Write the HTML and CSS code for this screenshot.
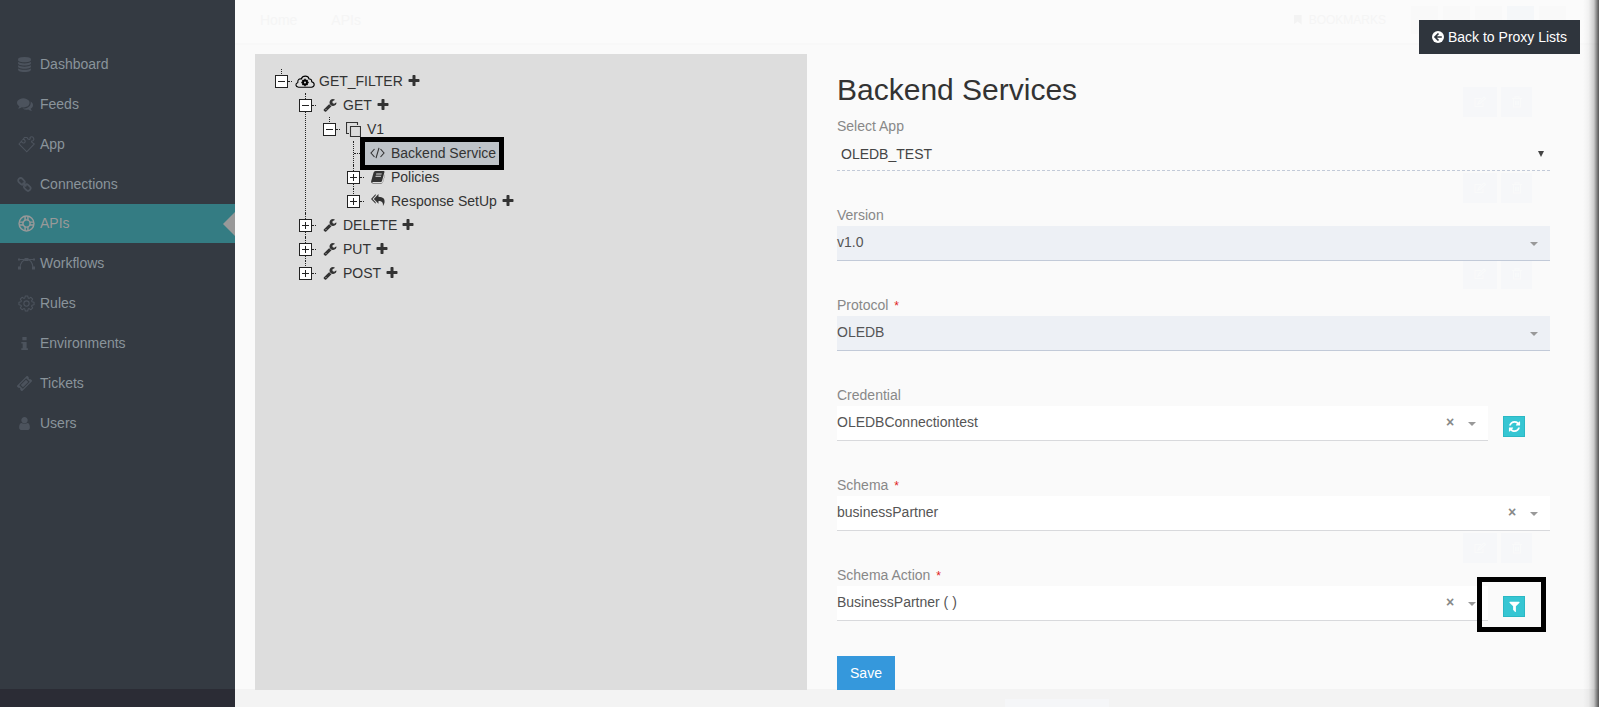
FILE: index.html
```html
<!DOCTYPE html>
<html lang="en">
<head>
<meta charset="utf-8">
<title>Backend Services</title>
<link rel="stylesheet" href="styles.css">
</head>
<body>
<svg class="defs" aria-hidden="true">
<symbol id="database" viewBox="0 0 1792 1792"><path d="M896 768q237 0 443-43t325-127v170q0 69-103 128t-280 93.500-385 34.500-385-34.500-280-93.500-103-128v-170q119 84 325 127t443 43zm0 768q237 0 443-43t325-127v170q0 69-103 128t-280 93.500-385 34.500-385-34.500-280-93.500-103-128v-170q119 84 325 127t443 43zm0-384q237 0 443-43t325-127v170q0 69-103 128t-280 93.500-385 34.500-385-34.500-280-93.500-103-128v-170q119 84 325 127t443 43zm0-1152q208 0 385 34.500t280 93.500 103 128v128q0 69-103 128t-280 93.500-385 34.500-385-34.500-280-93.500-103-128v-128q0-69 103-128t280-93.500 385-34.500z"/></symbol>
<symbol id="comments" viewBox="0 0 1792 1792"><path d="M1408 768q0 139-94 257t-256.500 186.500-353.500 68.500q-86 0-176-16-124 88-278 128-36 9-86 16h-3q-11 0-20.500-8t-11.500-21q-1-3-1-6.500t.5-6.500 2-6l2.500-5 3.500-5.500 4-5 4.500-5 4-4.500q5-6 23-25t26-29.500 22.500-29 25-38.500 20.500-44q-124-72-195-177t-71-224q0-139 94-257t256.500-186.500 353.500-68.500 353.500 68.500 256.500 186.500 94 257zm384 256q0 120-71 224.500t-195 176.500q10 24 20.500 44t25 38.500 22.500 29 26 29.500 23 25q1 1 4 4.500t4.500 5 4 5 3.500 5.500l2.500 5 2 6 .5 6.500-1 6.500q-3 14-13 22t-22 7q-50-7-86-16-154-40-278-128-90 16-176 16-271 0-472-132 58 4 88 4 161 0 309-45t264-129q125-92 192-212t67-254q0-77-23-152 129 71 204 178t75 230z"/></symbol>
<symbol id="puzzle" viewBox="0 0 17 17"><path class="line" d="M1 8 L3.500 5.200 C4 8 8 7.500 7 4.500 C6.500 3.500 5.500 3.300 5 3.500 L6.500 1.500 L9 1.500 L10 3 C12 4 12.500 3 12 1.500 C13 .3 15 .5 15.500 2 C16.500 4 15 5 13.800 5 C13 6 14 6.500 16.300 8 L8.800 15.800 Z"/></symbol>
<symbol id="link" viewBox="0 0 16 16"><g class="line thick"><rect x="1" y="2" width="7.500" height="5.200" rx="2.400" transform="rotate(45 4.700 4.600)"/><rect x="7.200" y="8.700" width="7.500" height="5.200" rx="2.400" transform="rotate(45 11 11.300)"/><path d="M6 6l4 4"/></g></symbol>
<symbol id="ring" viewBox="0 0 18 18"><g class="line ringline"><circle cx="9" cy="9" r="7.900"/><circle cx="9" cy="9" r="3.800"/><path d="M7.500 1.500v4M10.500 1.500v4M7.500 12.500v4M10.500 12.500v4M1.500 7.500h4M1.500 10.500h4M12.500 7.500h4M12.500 10.500h4"/></g></symbol>
<symbol id="vector" viewBox="0 0 17 14"><path class="line" d="M1 3h15M2 11C2.500 6 5 3.500 8.500 3S14.500 6 15 11"/><path d="M6.500 1.500h4v3h-4zM0 10h3v3H0zM14 10h3v3h-3zM0 2h2v2H0zM15 2h2v2h-2z"/></symbol>
<symbol id="gear" viewBox="0 0 18 18"><path class="line" stroke-linejoin="round" d="M7.700 1h2.600l.5 2.200 1 .4 1.900-1.200 1.900 1.900-1.200 1.900.4 1 2.200.5v2.600l-2.200.5-.4 1 1.200 1.900-1.900 1.900-1.900-1.200-1 .4-.5 2.200H7.700l-.5-2.200-1-.4-1.900 1.200-1.900-1.900 1.200-1.900-.4-1L1 10.300V7.700l2.200-.5.4-1-1.200-1.900 1.900-1.900 1.900 1.200 1-.4z"/><circle class="line" cx="9" cy="9" r="2.800"/></symbol>
<symbol id="info" viewBox="0 0 14 14"><path d="M5 1h4v3H5zM4 5.500h5v6h1.200V13H4v-1.500h1.300V7H4z"/></symbol>
<symbol id="ticket" viewBox="0 0 16 16"><g transform="rotate(-45 8 8)"><path fill-rule="evenodd" d="M0 4h16v2.500a1.600 1.600 0 0 0 0 3V12H0V9.500a1.600 1.600 0 0 0 0-3zM2.800 5.300v5.400h10.400V5.300z"/><path d="M4 6.300h8v3.400H4z"/></g></symbol>
<symbol id="user" viewBox="0 0 1792 1792"><path d="M1536 1399q0 109-62.500 187t-150.500 78h-854q-88 0-150.500-78t-62.500-187q0-85 8.500-160.500t31.500-152 58.500-131 94-89 134.500-34.500q131 128 313 128t313-128q76 0 134.500 34.500t94 89 58.500 131 31.500 152 8.500 160.500zm-256-887q0 159-112.500 271.500t-271.500 112.500-271.500-112.500-112.500-271.500 112.500-271.500 271.500-112.500 271.500 112.500 112.500 271.500z"/></symbol>
<symbol id="cloud" viewBox="0 0 20 13"><path class="line" d="M3.600 12.200C.3 12 0 8.600 2.800 7.400 2.500 4.500 4.500 3.400 6.300 4 7.500.2 13.300.2 14 4c2-.3 2.800 1 2.700 2.800 3.500 1 3.200 5.200-.2 5.400z"/><circle cx="10" cy="7.500" r="2" fill="none" stroke="currentColor" stroke-width="2"/><path d="M9.300 3.800h1.400v1.500H9.300zM9.300 9.700h1.400v1.500H9.300zM6.300 6.800h1.500v1.400H6.300zM12.200 6.800h1.500v1.400h-1.500zM7 5.500l1-1 1 1-1 1zM12 4.500l1 1-1 1-1-1zM7 9.500l1-1 1 1-1 1zM11 9.500l1-1 1 1-1 1z"/></symbol>
<symbol id="wrench" viewBox="0 0 1792 1792"><path d="M448 1472q0-26-19-45t-45-19-45 19-19 45 19 45 45 19 45-19 19-45zm644-420l-682 682q-37 37-90 37-52 0-91-37l-106-108q-38-36-38-90 0-53 38-91l681-681q39 98 114.500 173.500t173.500 114.500zm634-435q0 39-23 106-47 134-164.500 217.500t-258.500 83.500q-185 0-316.500-131.500t-131.500-316.500 131.500-316.500 316.500-131.500q58 0 121.500 16.500t107.500 46.500q16 11 16 28t-16 28l-293 169v224l193 107q5-3 79-48.500t135.500-81 70.500-35.500q15 0 23.500 10t8.500 25z"/></symbol>
<symbol id="plus" viewBox="0 0 1792 1792"><path d="M1600 736v192q0 40-28 68t-68 28h-416v416q0 40-28 68t-68 28h-192q-40 0-68-28t-28-68v-416h-416q-40 0-68-28t-28-68v-192q0-40 28-68t68-28h416v-416q0-40 28-68t68-28h192q40 0 68 28t28 68v416h416q40 0 68 28t28 68z"/></symbol>
<symbol id="copy" viewBox="0 0 15 15"><path class="line" d="M4.500 4.500h10v10h-10zM3 11.500H.500V.500h11V3"/></symbol>
<symbol id="code" viewBox="0 0 15 12"><path class="line" d="M4.500 2L1 6l3.500 4M10.500 2L14 6l-3.500 4M9 .8L6 11.200"/></symbol>
<symbol id="book" viewBox="0 0 14 13"><path fill-rule="evenodd" d="M4.500.5h8.200q1 .1.700 1.200L11 10.500q-.3 1-1.300 1H2q-.9 0-.8.500.1.500 1 .5H10.500q1 0 1.300-1L14 3.800v.8l-2 7q-.4 1.400-1.700 1.400H2Q-.3 13 .2 10.500L2.600 2Q3 .6 4.500.5zM5.300 3l-.3 1h5.500l.3-1zM4.700 5.200l-.3 1h5.500l.3-1z"/></symbol>
<symbol id="reply" viewBox="0 0 15 13"><path d="M8 0v3c5 .2 7 2.200 6.500 6-.2 1.700-1 3-1.700 4 .3-3.800-.8-5.200-4.800-5.400V10.500L3 5.300zM5 0v1.700L1.600 5.300 5 8.900v1.600L0 5.300z"/></symbol>
<symbol id="refresh" viewBox="0 0 1792 1792"><path d="M1639 1056q0 5-1 7-64 268-268 434.500t-478 166.500q-146 0-282.500-55t-243.500-157l-129 129q-19 19-45 19t-45-19-19-45v-448q0-26 19-45t45-19h448q26 0 45 19t19 45-19 45l-137 137q71 66 161 102t187 36q134 0 250-65t186-179q11-17 53-117 8-23 30-23h192q13 0 22.500 9.500t9.500 22.500zm25-800v448q0 26-19 45t-45 19h-448q-26 0-45-19t-19-45 19-45l138-138q-148-137-349-137-134 0-250 65t-186 179q-11 17-53 117-8 23-30 23h-199q-13 0-22.500-9.500t-9.500-22.500v-7q65-268 270-434.500t480-166.500q146 0 284 55.500t245 156.500l130-129q19-19 45-19t45 19 19 45z"/></symbol>
<symbol id="filter" viewBox="0 0 1792 1792"><path d="M1595 295q17 41-14 70l-493 493v742q0 42-39 59-13 5-25 5-27 0-45-19l-256-256q-19-19-19-45v-486l-493-493q-31-29-14-70 17-39 59-39h1280q42 0 59 39z"/></symbol>
<symbol id="back" viewBox="0 0 12 12"><circle cx="6" cy="6" r="6"/><path d="M6.500 2.500L3 6l3.500 3.500M3 6h6.800" fill="none" stroke="#2f353d" stroke-width="1.700"/></symbol>
<symbol id="edit" viewBox="0 0 12 12"><path class="line" d="M9 7v3.500H1v-8h6M4 8l1-2.500L10 1l1.500 1.500L6.500 7z"/></symbol>
<symbol id="trash" viewBox="0 0 12 12"><path class="line" d="M1 2.500h10M4 2V.700h4V2M2.500 3v8h7V3M4.500 5v4M6 5v4M7.500 5v4"/></symbol>
</svg>

<div class="app">
  <aside class="sidebar">
    <nav class="menu">
      <a class="item"><svg class="mi s15"><use href="#database"/></svg>Dashboard</a>
      <a class="item"><svg class="mi s16"><use href="#comments"/></svg>Feeds</a>
      <a class="item"><svg class="mi s17"><use href="#puzzle"/></svg>App</a>
      <a class="item"><svg class="mi s15"><use href="#link"/></svg>Connections</a>
      <a class="item active"><svg class="mi s17"><use href="#ring"/></svg>APIs</a>
      <a class="item"><svg class="mi s17"><use href="#vector"/></svg>Workflows</a>
      <a class="item"><svg class="mi s17"><use href="#gear"/></svg>Rules</a>
      <a class="item"><svg class="mi s15"><use href="#info"/></svg>Environments</a>
      <a class="item"><svg class="mi s15"><use href="#ticket"/></svg>Tickets</a>
      <a class="item"><svg class="mi s15"><use href="#user"/></svg>Users</a>
    </nav>
    <div class="sidefoot"></div>
  </aside>

  <main class="main">
    <div class="under">
      <div class="topbar"><span>Home</span><span class="crumb">APIs</span>
        <span class="bookmark"><i class="ribbon"></i>BOOKMARKS</span>
        <i class="chip"></i><i class="chip"></i><i class="chip"></i><i class="chip blue"></i><i class="chip"></i>
      </div>
      <div class="pair p1"><i><svg><use href="#edit"/></svg></i><i><svg><use href="#trash"/></svg></i></div>
      <div class="pair p2"><i><svg><use href="#edit"/></svg></i><i><svg><use href="#trash"/></svg></i></div>
      <div class="pair p3"><i><svg><use href="#edit"/></svg></i><i><svg><use href="#trash"/></svg></i></div>
      <div class="pair p4"><i><svg><use href="#edit"/></svg></i><i><svg><use href="#trash"/></svg></i></div>
      <div class="foot"><i></i></div>
    </div>

    <section class="tree">
      <ul class="root">
        <li><div class="row"><b class="box"></b><svg class="ti cloud"><use href="#cloud"/></svg>GET_FILTER<svg class="plus"><use href="#plus"/></svg></div>
          <ul>
            <li><div class="row"><b class="box"></b><svg class="ti"><use href="#wrench"/></svg>GET<svg class="plus"><use href="#plus"/></svg></div>
              <ul>
                <li><div class="row"><b class="box"></b><svg class="ti copy"><use href="#copy"/></svg>V1</div>
                  <ul>
                    <li class="leaf"><div class="row"><span class="selected"><svg class="ti code"><use href="#code"/></svg>Backend Service</span></div></li>
                    <li><div class="row"><b class="box more"></b><svg class="ti"><use href="#book"/></svg>Policies</div></li>
                    <li><div class="row"><b class="box more"></b><svg class="ti reply"><use href="#reply"/></svg>Response SetUp<svg class="plus"><use href="#plus"/></svg></div></li>
                  </ul>
                </li>
              </ul>
            </li>
            <li><div class="row"><b class="box more"></b><svg class="ti"><use href="#wrench"/></svg>DELETE<svg class="plus"><use href="#plus"/></svg></div></li>
            <li><div class="row"><b class="box more"></b><svg class="ti"><use href="#wrench"/></svg>PUT<svg class="plus"><use href="#plus"/></svg></div></li>
            <li><div class="row"><b class="box more"></b><svg class="ti"><use href="#wrench"/></svg>POST<svg class="plus"><use href="#plus"/></svg></div></li>
          </ul>
        </li>
      </ul>
    </section>

    <section class="form">
      <h1>Backend Services</h1>
      <label class="first">Select App</label>
      <div class="native">OLEDB_TEST<i></i></div>
      <div class="group"><label>Version</label><div class="line-row"><div class="field off"><span>v1.0</span><i class="caret"></i></div></div></div>
      <div class="group"><label>Protocol <em>*</em></label><div class="line-row"><div class="field off"><span>OLEDB</span><i class="caret"></i></div></div></div>
      <div class="group"><label>Credential</label><div class="line-row"><div class="field"><span>OLEDBConnectiontest</span><b>×</b><i class="caret"></i></div><button class="act"><svg><use href="#refresh"/></svg></button></div></div>
      <div class="group"><label>Schema <em>*</em></label><div class="line-row"><div class="field"><span>businessPartner</span><b>×</b><i class="caret"></i></div></div></div>
      <div class="group"><label>Schema Action <em>*</em></label><div class="line-row"><div class="field"><span>BusinessPartner ( )</span><b>×</b><i class="caret"></i></div><button class="act marked"><svg><use href="#filter"/></svg></button></div></div>
      <button class="save">Save</button>
    </section>

    <button class="backbtn"><svg><use href="#back"/></svg>Back to Proxy Lists</button>
    <div class="edge"></div>
  </main>
</div>
</body>
</html>
```
FILE: styles.css
```css
*, *::before, *::after { box-sizing: border-box; }
body { margin: 0; font: 14px/20px "Liberation Sans", Arial, sans-serif; color: #333; overflow: hidden; }
.defs { position: absolute; width: 0; height: 0; }
svg { fill: currentColor; flex: none; }
button { font: inherit; border: 0; padding: 0; }
.line { fill: none; stroke: currentColor; stroke-width: 1.1; }
.thick { stroke-width: 1.9; }
.ringline { stroke-width: 1.5; }
.app { display: flex; width: 1599px; height: 707px; }

/* Sidebar */
.sidebar { width: 235px; background: #343a42; display: flex; flex-direction: column; justify-content: space-between; }
.menu { padding-top: 44px; }
.item { display: flex; align-items: center; height: 40px; padding-left: 17px; color: #8a949b; }
.mi { color: #4c535d; margin-right: 8px; }
.s15 { width: 15px; height: 15px; }
.s16 { width: 16px; height: 16px; margin-right: 7px; }
.s17 { width: 17px; height: 17px; margin: 0 5px 0 1px; }
.active { position: relative; height: 39px; padding-bottom: 1px; background: #347c83; color: #999; }
.active .mi { color: #999; }
.active::after { content: ""; position: absolute; right: 0; top: 8px; border: 12px solid transparent; border-left: 0; border-right-color: #999; }
.sidefoot { height: 18px; background: #2b2c35; }

/* Dimmed page behind the dialog */
.main { position: relative; width: 1364px; height: 707px; background: #fafafa; padding: 54px 49px 17px 20px; display: flex; }
.under { position: absolute; inset: 0; color: #f5f5f5; }
.topbar { height: 45px; background: #fbfbfb; border-bottom: 2px solid #f8f8f8; display: flex; align-items: center; padding: 0 33px 4px 25px; gap: 5px; }
.crumb { margin-left: 29px; }
.bookmark { display: flex; align-items: center; margin-left: auto; margin-right: 20px; font-size: 12px; }
.ribbon { width: 8px; height: 10px; background: #f3f3f3; margin-right: 7px; clip-path: polygon(0 0,100% 0,100% 100%,50% 70%,0 100%); }
.chip { width: 27px; height: 28px; background: #f9f9f9; }
.blue { background: #f5f7f9; }
.pair { position: absolute; left: 1228px; display: flex; gap: 4px; }
.pair i { width: 34px; height: 30px; background: #f6f7f9; display: flex; align-items: center; justify-content: center; }
.pair i + i { width: 31px; }
.pair svg { width: 12px; height: 12px; color: #f9fafa; }
.p1 { top: 87px; }
.p2 { top: 173px; }
.p3 { top: 259px; }
.p4 { top: 533px; }
.foot { position: absolute; left: 0; right: 0; bottom: 0; height: 18px; background: #f3f3f3; }
.foot i { position: absolute; left: 770px; bottom: 0; width: 104px; height: 8px; background: #f5f6f8; }

/* Tree */
.tree { position: relative; width: 552px; background: #ddd; padding: 15px 0 0 20px; }
.tree ul { list-style: none; margin: 0; padding: 0 0 0 24px; }
.tree .root { padding: 0; }
.tree li { position: relative; }
.tree li::before { content: ""; position: absolute; left: 6px; top: 0; bottom: 0; border-left: 1px dotted #222; }
.tree li:last-child::before { bottom: auto; height: 7px; }
.row { display: flex; align-items: center; height: 24px; position: relative; }
.row::before { content: ""; position: absolute; left: 13px; top: 12px; width: 4px; border-top: 1px dotted #222; }
.leaf .row::before { left: 7px; width: 10px; }
.box { width: 13px; height: 13px; border: 1px solid #222; margin: 1px 11px 0 0; background: linear-gradient(#222,#222) center/7px 1px no-repeat #fff; z-index: 1; }
.more { background: linear-gradient(#222,#222) center/7px 1px no-repeat, linear-gradient(#222,#222) center/1px 7px no-repeat #fff; }
.ti { width: 14px; height: 14px; margin-right: 6px; }
.cloud { width: 20px; height: 13px; margin: 0 4px 0 -4px; color: #000; }
.row > .copy { width: 15px; height: 15px; margin: 0 6px 0 -1px; }
.row .code { width: 15px; height: 12px; margin-right: 6px; }
.reply { margin-top: -2px; }
.plus { width: 14px; height: 14px; margin: -1px 0 0 4px; }
.selected { position: relative; display: flex; align-items: center; height: 23px; margin-left: 18px; padding: 0 4px 0 5px; background: #bec3c8; box-shadow: 0 0 0 5px #000; width: 134px; white-space: nowrap; z-index: 2; }

/* Form */
.form { position: relative; width: 713px; margin-left: 30px; padding-top: 19px; }
h1 { margin: 0; font-size: 30px; line-height: 33px; font-weight: 400; }
label { display: block; height: 20px; line-height: 20px; color: #888; }
.first { margin-top: 10px; }
em { color: #e02222; font-style: normal; font-size: 12px; margin-left: 2px; }
.native { height: 35px; padding: 2px 6px 0 4px; line-height: 36px; color: #444; border-bottom: 1px dashed #c2cad8; display: flex; justify-content: space-between; align-items: center; }
.native i { border: 3px solid transparent; border-top: 6px solid #444; border-bottom: 0; }
.group { padding-top: 34px; height: 90px; }
.line-row { display: flex; gap: 15px; margin-top: 1px; }
.field { flex: 1; height: 35px; display: flex; align-items: center; background: #fff; border-bottom: 1px solid #d8d9dc; color: #555; padding: 0 12px 2px 0; }
.off { background: #edf0f5; border-color: #c2cad8; }
.field span { flex: 1; }
.field b { color: #888; font-size: 14px; width: 8px; margin-right: 14px; }
.caret { border: 4px solid transparent; border-top-color: #999; border-bottom: 0; margin-top: 4px; }
.off .caret { margin-top: 3px; }
.act { display: flex; align-items: center; justify-content: center; width: 22px; height: 21px; margin: 10px 25px 0 0; background: #36c6d3; border: 1px solid #2bb8c4; color: #fff; }
.act svg { width: 13px; height: 13px; }
.marked { position: relative; }
.marked::after { content: ""; position: absolute; left: -27px; top: -20px; width: 69px; height: 55px; border: 5px solid #000; }
.save { width: 58px; height: 34px; margin-top: 35px; background: #3598dc; color: #fff; }

.backbtn { position: absolute; right: 19px; top: 20px; width: 161px; height: 34px; display: flex; align-items: center; justify-content: center; gap: 4px; background: #2f353d; color: #fff; }
.backbtn svg { width: 12px; height: 12px; }
.edge { position: absolute; right: 0; top: 0; width: 16px; height: 707px; background: linear-gradient(90deg, transparent, rgba(0,0,0,.04) 35%, rgba(0,0,0,.18) 68%, rgba(0,0,0,.55) 92%, rgba(0,0,0,.65)); }
```
